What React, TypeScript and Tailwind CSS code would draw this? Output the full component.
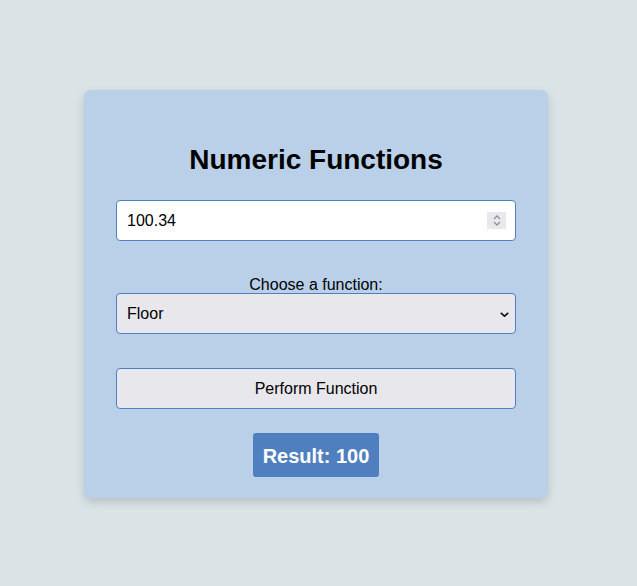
import React, { useState } from "react";

export default function App() {
  const [value, setValue] = useState("100.34");
  const [fn, setFn] = useState("floor");
  return (
    <div
      className="min-h-screen w-full flex items-center justify-center bg-[#dae3e6] pr-[5px] pt-[2px]"
      style={{ fontFamily: '"Liberation Sans", Arial, sans-serif' }}
    >
      <div className="w-[464px] h-[408px] bg-[#b9d0e8] rounded-[6px] shadow-[0_4px_10px_rgba(0,0,0,0.15)] px-[32px] pt-[54px] flex flex-col">
        <h1 className="text-[28px] leading-[32px] h-[32px] font-bold text-black text-center">
          Numeric Functions
        </h1>
        <div className="relative mt-[24px] h-[41px]">
          <input
            type="number"
            value={value}
            onChange={(e) => setValue(e.target.value)}
            className="block h-[41px] w-full rounded-[4px] border border-[#4f7fc0] bg-white px-[10px] pt-[1px] text-[16px] text-black outline-none [appearance:textfield] [&::-webkit-inner-spin-button]:appearance-none [&::-webkit-outer-spin-button]:appearance-none"
          />
          <div className="absolute right-[10px] top-[12px] w-[19px] h-[17px] bg-[#e9e9ed] flex flex-col items-center justify-center gap-[1px]">
            <svg width="8" height="5" viewBox="0 0 8 5" fill="none">
              <path d="M1 4 L4 1 L7 4" stroke="#8f8f9d" strokeWidth="1.3" />
            </svg>
            <svg width="8" height="5" viewBox="0 0 8 5" fill="none">
              <path d="M1 1 L4 4 L7 1" stroke="#8f8f9d" strokeWidth="1.3" />
            </svg>
          </div>
        </div>
        <label className="mt-[34px] h-[18px] leading-[20px] text-[16px] text-black text-center">
          Choose a function:
        </label>
        <div className="relative h-[41px]">
          <select
            value={fn}
            onChange={(e) => setFn(e.target.value)}
            className="block h-[41px] w-full appearance-none rounded-[4px] border border-[#4f7fc0] bg-[#e8e7ec] px-[10px] pt-[1px] text-[16px] text-black outline-none"
          >
            <option value="floor">Floor</option>
            <option value="ceil">Ceil</option>
            <option value="round">Round</option>
          </select>
          <svg
            className="absolute right-[7px] top-[19px] pointer-events-none"
            width="9"
            height="5"
            viewBox="0 0 9 5"
            fill="none"
          >
            <path d="M0.8 0.8 L4.5 4.2 L8.2 0.8" stroke="#111" strokeWidth="1.6" />
          </svg>
        </div>
        <button className="mt-[34px] h-[41px] w-full rounded-[4px] border border-[#4f7fc0] bg-[#e8e7ec] pt-[1px] text-[16px] text-black">
          Perform Function
        </button>
        <div className="mt-[24px] flex justify-center">
          <div className="h-[44px] px-[10px] pt-[1px] flex items-center rounded-[3px] bg-[#507fbf] text-white text-[20px] font-bold">
            Result: 100
          </div>
        </div>
      </div>
    </div>
  );
}
